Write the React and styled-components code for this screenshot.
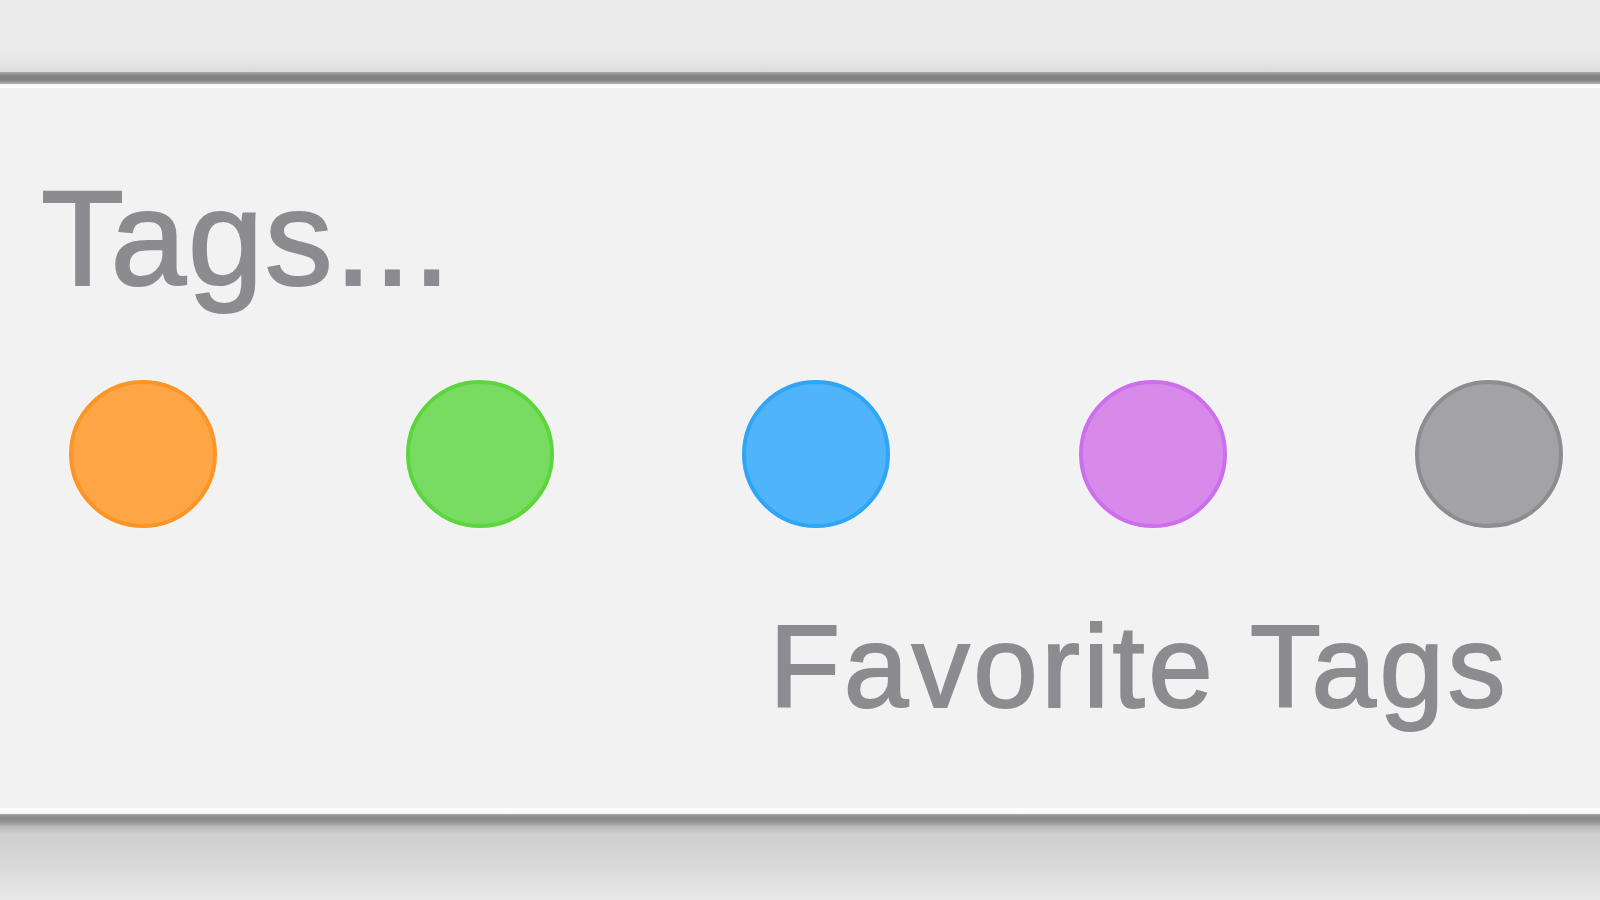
import React from "react";
import styled, { createGlobalStyle } from "styled-components";

const Global = createGlobalStyle`
  html, body { margin: 0; padding: 0; background: #e6e6e6; overflow: hidden; }
  #root { width: 1600px; height: 900px; }
`;

const Screen = styled.div`
  width: 1600px;
  height: 900px;
  display: flex;
  flex-direction: column;
  font-family: "Liberation Sans", Arial, Helvetica, sans-serif;
`;

const TopStrip = styled.div`
  height: 72px;
  flex: none;
  background: linear-gradient(to bottom, #ececec 0px, #ebebeb 52px, #e3e3e3 64px, #dcdcdc 72px);
`;

const Rim = styled.div`
  flex: none;
  height: ${(p) => p.$h}px;
  background: ${(p) => p.$bg};
`;

const Panel = styled.section`
  flex: 1;
  background: #f2f2f2;
  display: flex;
  flex-direction: column;
  padding: 82px 37px 0 69px;
`;

const Label = styled.div`
  line-height: 1;
  color: #8c8c90;
  -webkit-text-stroke: 2px #8c8c90;
`;

const Title = styled(Label)`
  font-size: 136px;
  margin-left: -28px;
  letter-spacing: 1.5px;
`;

const Swatches = styled.div`
  margin-top: 74px;
  display: flex;
  justify-content: space-between;
`;

const Dot = styled.div`
  width: 148px;
  height: 148px;
  box-sizing: border-box;
  border-radius: 50%;
  background: ${(p) => p.$fill};
  border: 4px solid ${(p) => p.$edge};
  box-shadow: 0 0 2px rgba(255, 255, 255, 0.9);
`;

const Caption = styled(Label)`
  margin-top: 81px;
  align-self: flex-end;
  margin-right: 54px;
  font-size: 116px;
  letter-spacing: 3.5px;
`;

const BottomShade = styled.div`
  height: 74px;
  flex: none;
  background: linear-gradient(to bottom, #b9b9b9 0px, #cfcfcf 8px, #d5d5d5 30px, #e2e2e2 60px, #e8e8e8 74px);
`;

const tags = [
  { fill: "#fea545", edge: "#fd9426" },
  { fill: "#78dc62", edge: "#5bd63c" },
  { fill: "#4fb4f9", edge: "#2ea5f6" },
  { fill: "#d78ae9", edge: "#cd6fec" },
  { fill: "#a3a3a6", edge: "#8d8d91" },
];

export default function App() {
  return (
    <>
      <Global />
      <Screen>
        <TopStrip />
        <Rim $h={12} $bg="linear-gradient(to bottom, #a9a9a9, #7f7f7f 35%, #838383 70%, #b5b5b5)" />
        <Rim $h={4} $bg="linear-gradient(to bottom, #f6f6f6, #ffffff)" />
        <Panel>
          <Title>Tags...</Title>
          <Swatches>
            {tags.map((t, i) => (
              <Dot key={i} $fill={t.fill} $edge={t.edge} />
            ))}
          </Swatches>
          <Caption>Favorite Tags</Caption>
        </Panel>
        <Rim $h={6} $bg="linear-gradient(to bottom, #ffffff, #f7f7f7)" />
        <Rim $h={12} $bg="linear-gradient(to bottom, #a6a6a6, #8a8a8a 30%, #8f8f8f 60%, #b0b0b0)" />
        <BottomShade />
      </Screen>
    </>
  );
}
